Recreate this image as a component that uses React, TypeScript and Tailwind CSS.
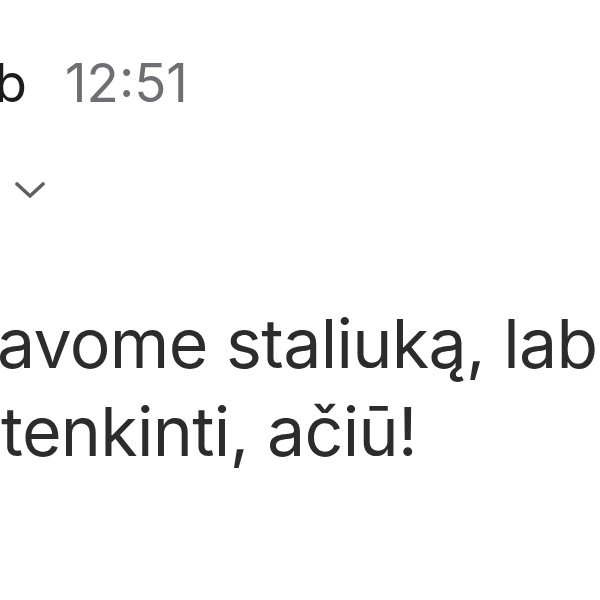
import React from 'react';

// Cropped view of an email message: the start of each line lies off to the left.
function Clipped({ hidden, children }: { hidden: string; children: React.ReactNode }) {
  return (
    <div className="flex whitespace-nowrap">
      <span className="flex w-0 justify-end">{hidden}</span>
      <span>{children}</span>
    </div>
  );
}

export default function App() {
  return (
    <div className="h-[600px] w-[600px] overflow-hidden bg-white font-['Inter',sans-serif] antialiased">
      <div className="flex items-baseline whitespace-nowrap pt-[51px] text-[53px] leading-[64px]">
        <span className="flex w-0 justify-end pl-[27px] text-[#1c1c1e]">Jakub</span>
        <span className="ml-[38px] text-[#6e6e73]">12:51</span>
      </div>

      <div className="mt-[67px] pl-[15px]">
        <svg width="30" height="16" viewBox="0 0 30 16" fill="none">
          <polyline
            points="2,2 15,14 28,2"
            stroke="#5f5f64"
            strokeWidth="3.6"
            strokeLinecap="round"
            strokeLinejoin="round"
          />
        </svg>
      </div>

      <div className="mt-[101px] text-[68px] leading-[88px] tracking-[-0.01em] text-[#2c2c2e]">
        <div className="-ml-[3px]">
          <Clipped hidden="Rezerv">avome staliuką, labai</Clipped>
        </div>
        <div className="ml-[1px]">
          <Clipped hidden="pa">tenkinti, ačiū!</Clipped>
        </div>
      </div>
    </div>
  );
}
